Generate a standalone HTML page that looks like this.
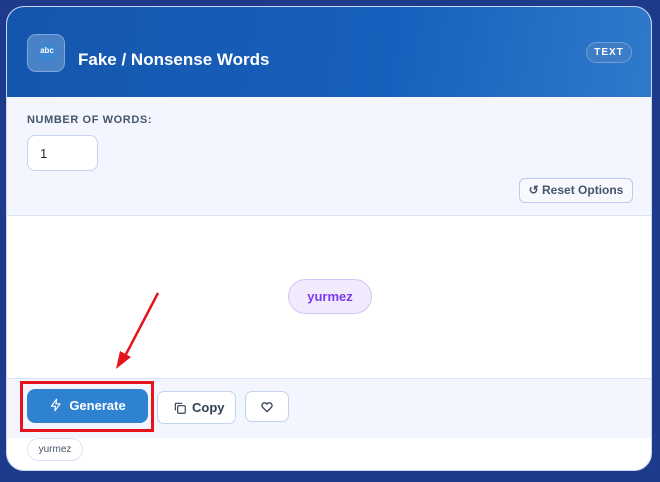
<!DOCTYPE html><html><head><style>
body{margin:0;width:660px;height:482px;background:#1e3a8a;font-family:"Liberation Sans",sans-serif;position:relative;overflow:hidden}
.card{position:absolute;left:6px;top:6px;width:646px;height:465px;background:#fff;border-radius:18px;overflow:hidden;border:1px solid #c9d6f0;box-sizing:border-box}
.hd{position:absolute;left:0;top:0;width:100%;height:90px;background:linear-gradient(100deg,#1456ad 0%,#1760bd 60%,#2f7acc 100%)}
.ic{position:absolute;left:20px;top:27px;width:38px;height:38px;border-radius:9px;background:#4a82c8;border:1px solid #7ea6dc;box-sizing:border-box}
.ic span{position:absolute;left:10px;top:8px;width:18px;height:18px;background:#3d86d0;color:#fff;font-size:8px;font-weight:bold;text-align:center;line-height:16px;border-radius:2px}
.tt{position:absolute;left:71px;top:43px;color:#fff;font-weight:bold;font-size:17px}
.tag{position:absolute;left:579px;top:35px;width:46px;height:21px;border-radius:11px;background:#3f7cc6;border:1px solid #6e9fd8;box-sizing:border-box;color:#fff;font-size:10px;font-weight:bold;text-align:center;line-height:19px;letter-spacing:1px}
.opt{position:absolute;left:0;top:90px;width:100%;height:118px;background:#f3f6fe;border-bottom:1px solid #dbe4f5}
.lb{position:absolute;left:20px;top:17px;font-size:11px;color:#475569;letter-spacing:.6px;font-weight:bold}
.inp{position:absolute;left:20px;top:38px;width:71px;height:36px;border:1px solid #c3d3f0;border-radius:8px;background:#fff;box-sizing:border-box;font-size:13px;color:#1e293b;padding:10px 12px}
.rs{position:absolute;left:512px;top:81px;width:114px;height:25px;border:1px solid #b8cdef;border-radius:6px;background:#f7f9fe;box-sizing:border-box;font-size:12px;color:#475569;text-align:center;line-height:23px;font-weight:bold}
.res{position:absolute;left:281px;top:272px;width:84px;height:35px;border-radius:18px;background:#f1eafd;border:1px solid #d6c4f3;box-sizing:border-box;color:#7c3aed;font-weight:bold;font-size:13px;text-align:center;line-height:33px}
.ft{position:absolute;left:0;top:371px;width:100%;height:59px;background:#f3f6fe;border-top:1px solid #dbe4f5}
.red{position:absolute;left:13px;top:2px;width:134px;height:51px;border:3px solid #e5141c;box-sizing:border-box}
.gen{position:absolute;left:20px;top:10px;width:121px;height:34px;border-radius:8px;background:#2f82d0;color:#fff;font-weight:bold;font-size:13px;line-height:34px;text-align:center}
.cp{position:absolute;left:150px;top:12px;width:79px;height:33px;border:1px solid #c3d3f0;border-radius:7px;background:#fff;box-sizing:border-box;font-size:13px;font-weight:bold;color:#334155;line-height:31px;padding-left:34px}
.hr{position:absolute;left:238px;top:12px;width:44px;height:31px;border:1px solid #c3d3f0;border-radius:7px;background:#fff;box-sizing:border-box}
.chip{position:absolute;left:20px;top:431px;width:56px;height:23px;border:1px solid #dbe4f5;border-radius:12px;box-sizing:border-box;font-size:10px;color:#475569;text-align:center;line-height:21px}
</style></head><body>
<div class="card">
<div class="hd"><div class="ic"><span>abc</span></div><div class="tt">Fake / Nonsense Words</div><div class="tag">TEXT</div></div>
<div class="opt"><div class="lb">NUMBER OF WORDS:</div><div class="inp">1</div><div class="rs">↺ Reset Options</div></div>
<div class="res">yurmez</div>
<div class="ft"><div class="red"></div><div class="gen"><svg width="14" height="14" viewBox="0 0 24 24" style="vertical-align:-2px;margin-right:6px" fill="none" stroke="#fff" stroke-width="2" stroke-linejoin="round"><path d="M13 2L4 14h7l-1 8 9-12h-7z"/></svg>Generate</div>
<div class="cp"><svg width="14" height="14" viewBox="0 0 24 24" style="position:absolute;left:15px;top:9px" fill="none" stroke="#334155" stroke-width="2"><rect x="8" y="8" width="13" height="13" rx="2"/><path d="M4 16V5a1 1 0 0 1 1-1h11"/></svg>Copy</div>
<div class="hr"><svg width="14" height="14" viewBox="0 0 24 24" style="position:absolute;left:14px;top:8px" fill="none" stroke="#334155" stroke-width="2.2"><path d="M12 20l-8-8a4.5 4.5 0 0 1 8-5 4.5 4.5 0 0 1 8 5z"/></svg></div></div>
<div class="chip">yurmez</div>
</div>
<svg style="position:absolute;left:0;top:0" width="660" height="482"><path d="M158 293L124 358" stroke="#e5141c" stroke-width="2.5"/><path d="M116 369L120 351L131 357z" fill="#e5141c"/></svg>
</body></html>
